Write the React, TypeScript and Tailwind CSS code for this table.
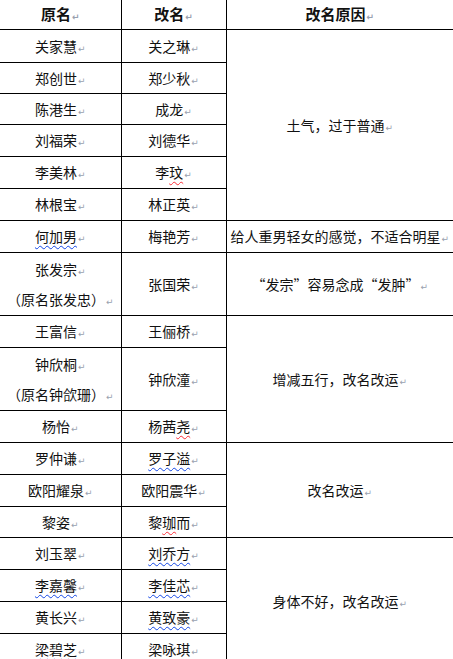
import React from "react";

type Part = { t: string; wave?: "red" | "blue" };
type Line = Part[];

const P = (t: string, wave?: "red" | "blue"): Part => ({ t, wave });

// each row: height, col1 lines, col2 lines, reason cell (rowspan)
type Row = {
  h: number;
  a: Line[];
  b: Line[];
  r?: { text: string; span: number };
};

const rows: Row[] = [
  { h: 33, a: [[P("关家慧")]], b: [[P("关之琳")]], r: { text: "土气，过于普通", span: 6 } },
  { h: 31, a: [[P("郑创世")]], b: [[P("郑少秋")]] },
  { h: 31, a: [[P("陈港生")]], b: [[P("成龙")]] },
  { h: 32, a: [[P("刘福荣")]], b: [[P("刘德华")]] },
  { h: 32, a: [[P("李美林")]], b: [[P("李"), P("玟", "red")]] },
  { h: 32, a: [[P("林根宝")]], b: [[P("林正英")]] },
  { h: 32, a: [[P("何加男", "blue")]], b: [[P("梅艳芳")]], r: { text: "给人重男轻女的感觉，不适合明星", span: 1 } },
  { h: 63, a: [[P("张发宗")], [P("（原名张发忠）")]], b: [[P("张国荣")]], r: { text: "“发宗”容易念成“发肿”", span: 1 } },
  { h: 32, a: [[P("王富信")]], b: [[P("王俪桥")]], r: { text: "增减五行，改名改运", span: 3 } },
  { h: 63, a: [[P("钟欣桐")], [P("（原名钟欱珊）")]], b: [[P("钟欣潼")]] },
  { h: 32, a: [[P("杨怡")]], b: [[P("杨茜"), P("尧", "red")]] },
  { h: 32, a: [[P("罗仲谦")]], b: [[P("罗子溢", "blue")]], r: { text: "改名改运", span: 3 } },
  { h: 32, a: [[P("欧阳耀泉")]], b: [[P("欧阳震华")]] },
  { h: 31, a: [[P("黎姿")]], b: [[P("黎"), P("珈", "red"), P("而")]] },
  { h: 32, a: [[P("刘玉翠")]], b: [[P("刘乔方", "blue")]], r: { text: "身体不好，改名改运", span: 4 } },
  { h: 32, a: [[P("李嘉馨", "blue")]], b: [[P("李佳芯", "blue")]] },
  { h: 32, a: [[P("黄长兴")]], b: [[P("黄致豪", "blue")]] },
  { h: 32, a: [[P("梁碧芝", "blue")]], b: [[P("梁咏琪")]] },
];

function Mark() {
  return (
    <span className="ml-px text-[9px] leading-none text-gray-400 font-['DejaVu_Sans',sans-serif]">↵</span>
  );
}

function Text({ line }: { line: Line }) {
  return (
    <div className="h-[30px] leading-[30px] whitespace-nowrap">
      {line.map((p, i) => (
        <span
          key={i}
          className={
            p.wave === "red"
              ? "underline decoration-wavy decoration-red-500 decoration-1 underline-offset-[3px]"
              : p.wave === "blue"
              ? "underline decoration-wavy decoration-blue-700 decoration-1 underline-offset-[3px]"
              : ""
          }
        >
          {p.t}
        </span>
      ))}
      <Mark />
    </div>
  );
}

export default function App() {
  return (
    <div className="w-[453px] bg-white overflow-hidden font-['Noto_Sans_CJK_SC',sans-serif] text-[14px] leading-[30px] text-[#111]">
      <table className="w-[453px] table-fixed border-collapse">
        <colgroup>
          <col className="w-[121px]" />
          <col className="w-[105px]" />
          <col className="w-[227px]" />
        </colgroup>
        <thead>
          <tr className="h-[29px]">
            <th className="border-b border-r border-black text-center font-bold text-[15px] leading-[28px] p-0">
              原名<Mark />
            </th>
            <th className="border-b border-r border-black text-center font-bold text-[15px] leading-[28px] p-0">
              改名<Mark />
            </th>
            <th className="border-b border-black text-center font-bold text-[15px] leading-[28px] p-0">
              改名原因<Mark />
            </th>
          </tr>
        </thead>
        <tbody>
          {rows.map((row, i) => (
            <tr key={i} style={{ height: row.h }}>
              <td className="border-b border-r border-black text-center align-middle p-0">
                {row.a.map((l, j) => (
                  <Text key={j} line={l} />
                ))}
              </td>
              <td className="border-b border-r border-black text-center align-middle p-0">
                {row.b.map((l, j) => (
                  <Text key={j} line={l} />
                ))}
              </td>
              {row.r && (
                <td rowSpan={row.r.span} className="border-b border-black text-center align-middle p-0">
                  <Text line={[P(row.r.text)]} />
                </td>
              )}
            </tr>
          ))}
        </tbody>
      </table>
    </div>
  );
}
